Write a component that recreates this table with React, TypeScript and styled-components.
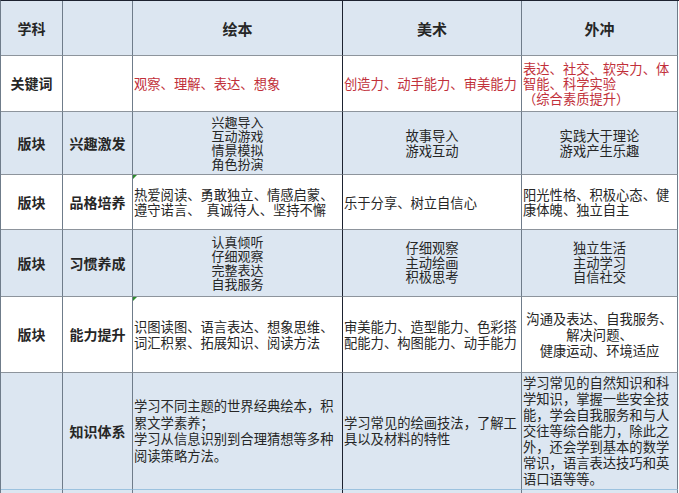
import React from "react";
import styled, { createGlobalStyle, css } from "styled-components";

const Global = createGlobalStyle`
  html, body { margin: 0; padding: 0; background: #ffffff; }
  body { width: 679px; height: 493px; overflow: hidden; }
  #root { width: 679px; height: 493px; overflow: hidden; }
`;

const BLUE = "#dce6f1";
const H_LINE = "#8d949c";
const V_SOFT = "#6f7c8a";
const V_DARK = "#1d2230";

const Table = styled.div`
  display: grid;
  grid-template-columns: 62px 70px 210px 179px 156px;
  grid-template-rows: 55px 56px 63px 55px 67px 76px 117px 20px;
  width: 678px;
  border-left: 1px solid ${V_SOFT};
  border-top: 1px solid ${V_DARK};
  font-family: "Noto Sans CJK SC", "Noto Sans", sans-serif;
  color: #1e1e1e;
`;

type CellProps = {
  $bg?: string;
  $align?: "left" | "center";
  $lh?: number;
  $color?: string;
  $bold?: boolean;
  $size?: number;
  $vline?: string;
  $hline?: string;
  $mark?: boolean;
};

const Cell = styled.div<CellProps>`
  position: relative;
  display: flex;
  flex-direction: column;
  justify-content: center;
  align-items: ${(p) => (p.$align === "left" ? "flex-start" : "center")};
  text-align: ${(p) => p.$align ?? "center"};
  padding: 0 0 0 ${(p) => (p.$align === "left" ? "1px" : "0")};
  background: ${(p) => p.$bg ?? "#ffffff"};
  border-right: 1px solid ${(p) => p.$vline ?? V_SOFT};
  border-bottom: 1px solid ${(p) => p.$hline ?? H_LINE};
  font-size: ${(p) => p.$size ?? 13.3}px;
  line-height: ${(p) => p.$lh ?? 15}px;
  font-weight: ${(p) => (p.$bold ? 700 : 400)};
  color: ${(p) => p.$color ?? "#262626"};
  white-space: pre;
  ${(p) =>
    p.$mark &&
    css`
      &::before {
        content: "";
        position: absolute;
        left: 0;
        top: 0;
        width: 0;
        height: 0;
        border-top: 4px solid #2e8b2e;
        border-right: 4px solid transparent;
      }
    `}
`;

const Line = styled.span`
  display: block;
`;

const RED = "#c1303a";

type C = {
  lines?: string[];
  align?: "left" | "center";
  lh?: number;
  color?: string;
  bold?: boolean;
  size?: number;
  mark?: boolean;
};

type Row = { bg: string; hline?: string; cells: C[] };

const rows: Row[] = [
  {
    bg: BLUE,
    cells: [
      { lines: ["学科"], bold: true, size: 14 },
      {},
      { lines: ["绘本"], bold: true, size: 15 },
      { lines: ["美术"], bold: true, size: 15 },
      { lines: ["外冲"], bold: true, size: 15 },
    ],
  },
  {
    bg: "#ffffff",
    cells: [
      { lines: ["关键词"], bold: true, size: 14 },
      {},
      { lines: ["观察、理解、表达、想象"], align: "left", color: RED },
      { lines: ["创造力、动手能力、审美能力"], align: "left", color: RED },
      {
        lines: ["表达、社交、软实力、体", "智能、科学实验", "（综合素质提升）"],
        align: "left",
        color: RED,
        lh: 15,
      },
    ],
  },
  {
    bg: BLUE,
    cells: [
      { lines: ["版块"], bold: true, size: 14 },
      { lines: ["兴趣激发"], bold: true, size: 14 },
      { lines: ["兴趣导入", "互动游戏", "情景模拟", "角色扮演"], lh: 14, size: 13 },
      { lines: ["故事导入", "游戏互动"], lh: 15 },
      { lines: ["实践大于理论", "游戏产生乐趣"], lh: 15 },
    ],
  },
  {
    bg: "#ffffff",
    cells: [
      { lines: ["版块"], bold: true, size: 14 },
      { lines: ["品格培养"], bold: true, size: 14 },
      {
        lines: ["热爱阅读、勇敢独立、情感启蒙、", "遵守诺言、  真诚待人、坚持不懈"],
        align: "left",
        mark: true,
      },
      { lines: ["乐于分享、树立自信心"], align: "left" },
      { lines: ["阳光性格、积极心态、健", "康体魄、独立自主"], align: "left" },
    ],
  },
  {
    bg: BLUE,
    cells: [
      { lines: ["版块"], bold: true, size: 14 },
      { lines: ["习惯养成"], bold: true, size: 14 },
      { lines: ["认真倾听", "仔细观察", "完整表达", "自我服务"], lh: 14, size: 13 },
      { lines: ["仔细观察", "主动绘画", "积极思考"], lh: 14.5 },
      { lines: ["独立生活", "主动学习", "自信社交"], lh: 14.5 },
    ],
  },
  {
    bg: "#ffffff",
    cells: [
      { lines: ["版块"], bold: true, size: 14 },
      { lines: ["能力提升"], bold: true, size: 14 },
      {
        lines: ["识图读图、语言表达、想象思维、", "词汇积累、拓展知识、阅读方法"],
        align: "left",
        lh: 16,
        mark: true,
      },
      {
        lines: ["审美能力、造型能力、色彩搭", "配能力、构图能力、动手能力"],
        align: "left",
        lh: 16,
      },
      {
        lines: ["沟通及表达、自我服务、", "解决问题、", "健康运动、环境适应"],
        lh: 16,
      },
    ],
  },
  {
    bg: BLUE,
    hline: "#9cc2df",
    cells: [
      {},
      { lines: ["知识体系"], bold: true, size: 14 },
      {
        lines: [
          "学习不同主题的世界经典绘本，积",
          "累文学素养；",
          "学习从信息识别到合理猜想等多种",
          "阅读策略方法。",
        ],
        align: "left",
        lh: 16.5,
      },
      {
        lines: ["学习常见的绘画技法，了解工", "具以及材料的特性"],
        align: "left",
        lh: 16.5,
      },
      {
        lines: [
          "学习常见的自然知识和科",
          "学知识，掌握一些安全技",
          "能，学会自我服务和与人",
          "交往等综合能力，除此之",
          "外，还会学到基本的数学",
          "常识，语言表达技巧和英",
          "语口语等等。",
        ],
        align: "left",
        lh: 16,
      },
    ],
  },
  {
    bg: BLUE,
    cells: [{}, {}, {}, {}, {}],
  },
];

const vlines = [V_SOFT, V_SOFT, V_DARK, V_SOFT, V_SOFT];

export default function App() {
  return (
    <>
      <Global />
      <Table>
        {rows.map((row, ri) =>
          row.cells.map((c, ci) => (
            <Cell
              key={`${ri}-${ci}`}
              $bg={row.bg}
              $align={c.align}
              $lh={c.lh}
              $color={c.color}
              $bold={c.bold}
              $size={c.size}
              $vline={vlines[ci]}
              $hline={row.hline}
              $mark={c.mark}
            >
              {(c.lines ?? []).map((l, li) => (
                <Line key={li}>{l}</Line>
              ))}
            </Cell>
          ))
        )}
      </Table>
    </>
  );
}
